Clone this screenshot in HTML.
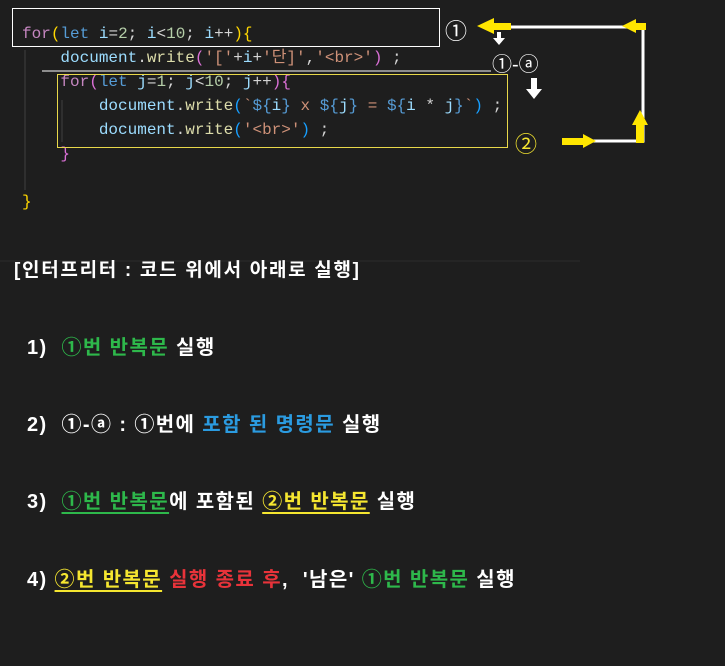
<!DOCTYPE html>
<html><head><meta charset="utf-8"><style>
body{margin:0;width:725px;height:666px;background:#1e1e1e;overflow:hidden;position:relative;font-family:"Liberation Sans","Noto Sans CJK KR",sans-serif}
.code{position:absolute;left:22px;top:22px;font-family:"Liberation Mono","Noto Sans CJK KR",monospace;font-size:16px;line-height:24px;white-space:pre;color:#d4d4d4}
.k{color:#c586c0}.b{color:#569cd6}.v{color:#9cdcfe}.n{color:#b5cea8}.y{color:#ffd700}.s{color:#ce9178}.f{color:#dcdcaa}.p{color:#da70d6}.c{color:#179fff}
.ab{position:absolute}
.t{position:absolute;color:#fff;font-weight:bold;white-space:pre;letter-spacing:1.4px}
.g{color:#2eb84b}.bl{color:#2b9be0}.yl{color:#f5e630}.r{color:#e8333a}
.u{text-decoration:underline;text-underline-offset:4px}
</style></head><body>
<div class="code"><span class="k">for</span><span class="y">(</span><span class="b">let</span> <span class="v">i</span>=<span class="n">2</span>; <span class="v">i</span>&lt;<span class="n">10</span>; <span class="v">i</span>++<span class="y">){</span>
    <span class="v">document</span>.<span class="f">write</span><span class="p">(</span><span class="s">'['</span>+<span class="v">i</span>+<span class="s">'단]'</span>,<span class="s">'&lt;br&gt;'</span><span class="p">)</span> ;
    <span class="k">for</span><span class="p">(</span><span class="b">let</span> <span class="v">j</span>=<span class="n">1</span>; <span class="v">j</span>&lt;<span class="n">10</span>; <span class="v">j</span>++<span class="p">){</span>
        <span class="v">document</span>.<span class="f">write</span><span class="c">(</span><span class="s">`</span><span class="b">${</span><span class="v">i</span><span class="b">}</span><span class="s"> x </span><span class="b">${</span><span class="v">j</span><span class="b">}</span><span class="s"> = </span><span class="b">${</span><span class="v">i</span> * <span class="v">j</span><span class="b">}</span><span class="s">`</span><span class="c">)</span> ;
        <span class="v">document</span>.<span class="f">write</span><span class="c">(</span><span class="s">'&lt;br&gt;'</span><span class="c">)</span> ;
    <span class="p">}</span>

<span class="y">}</span></div>
<svg class="ab" style="left:0;top:0" width="725" height="666">
<line x1="25" y1="50" x2="25" y2="190" stroke="#404040" stroke-width="1"/>
<line x1="62" y1="100" x2="62" y2="142" stroke="#404040" stroke-width="1"/>
<rect x="12.5" y="8.5" width="427" height="38" fill="none" stroke="#fff" stroke-width="1"/>
<line x1="42" y1="71" x2="491" y2="71" stroke="#fff" stroke-width="1"/>
<rect x="57.5" y="74.5" width="450" height="73" fill="none" stroke="#e8d84a" stroke-width="1"/>
<line x1="0" y1="261" x2="580" y2="261" stroke="#2c2c2c" stroke-width="1"/>
<polyline points="510,27 643,27 643,141 590,141" fill="none" stroke="#fff" stroke-width="3"/>
<polygon points="477,26 494,18 494,23 511,23 511,30 494,30 494,34" fill="#ffe600"/>
<polygon points="622,26 636,19 636,23 646,23 646,30 636,30 636,33" fill="#ffe600"/>
<polygon points="640,110 648,125 644,125 644,143 636,143 636,125 632,125" fill="#ffe600"/>
<polygon points="596,141 583,134 583,138 562,138 562,145 583,145 583,148" fill="#ffe600"/>
<polygon points="499,45 493,38 497,38 497,32 501,32 501,38 505,38" fill="#fff"/>
<polygon points="534,99 526,89 531,89 531,78 537,78 537,89 542,89" fill="#fff"/>
</svg>
<div class="t" style="left:445px;top:14px;font-size:22px;font-weight:normal;letter-spacing:0">①</div>
<div class="t" style="left:492px;top:48px;font-size:20px;font-weight:normal;letter-spacing:0">①-ⓐ</div>
<div class="t" style="left:515px;top:127px;font-size:22px;font-weight:normal;color:#f5e630;letter-spacing:0">②</div>
<div class="t" style="left:14px;top:255px;font-size:19px;letter-spacing:1.7px">[인터프리터 : 코드 위에서 아래로 실행]</div>
<div class="t" style="left:27px;top:331px;font-size:20px">1)  <span class="g">①번 반복문</span> 실행</div>
<div class="t" style="left:27px;top:408px;font-size:20px">2)  ①-ⓐ : ①번에 <span class="bl">포함 된 명령문</span> 실행</div>
<div class="t" style="left:27px;top:485px;font-size:20px">3)  <span class="g u">①번 반복문</span>에 포함된 <span class="yl u">②번 반복문</span> 실행</div>
<div class="t" style="left:27px;top:563px;font-size:20px">4) <span class="yl u">②번 반복문</span> <span class="r">실행 종료 후</span>,  '남은' <span class="g">①번 반복문</span> 실행</div>
</body></html>
